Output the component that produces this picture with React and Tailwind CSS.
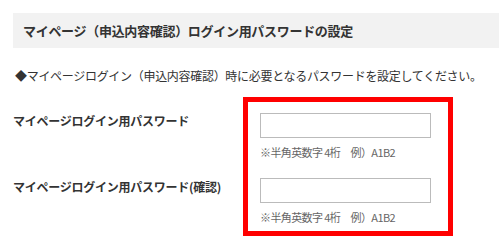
const font = { fontFamily: '"Noto Sans CJK JP", "Noto Sans", sans-serif' };

const Hint = () => (
  <p className="mt-[7px] text-[11px] leading-[14px] tracking-[-0.6px] text-[#666]">※半角英数字 4桁　例）A1B2</p>
);

const App = () => {
  return (
    <div className="w-[499px] h-[246px] overflow-hidden bg-white pl-[13px] pt-[13px] text-[#333]" style={font}>
      <div className="h-[35px] bg-[#f2f2f2] pl-[10px] flex items-center text-[13px] font-bold tracking-[-0.3px] whitespace-nowrap">
        マイページ（申込内容確認）ログイン用パスワードの設定
      </div>

      <p className="mt-[19px] pl-[2px] text-[12px] leading-[18px] tracking-[-0.3px] whitespace-nowrap">
        ◆マイページログイン（申込内容確認）時に必要となるパスワードを設定してください。
      </p>

      <div className="mt-[12px] flex">
        <div className="w-[230px] pt-[15px] text-[12px] leading-[18px] font-semibold tracking-[-0.25px] whitespace-nowrap">
          <p>マイページログイン用パスワード</p>
          <p className="mt-[48px]">マイページログイン用パスワード(確認)</p>
        </div>

        <div className="w-[210px] h-[139px] border-[5px] border-[#ff0000] pl-[12px] pt-[11px]">
          <input type="password" className="block w-[171px] h-[25px] border border-[#bbb] bg-white outline-none" />
          <Hint />
          <input type="password" className="block mt-[19px] w-[171px] h-[25px] border border-[#bbb] bg-white outline-none" />
          <Hint />
        </div>
      </div>
    </div>
  );
};

export default App;
